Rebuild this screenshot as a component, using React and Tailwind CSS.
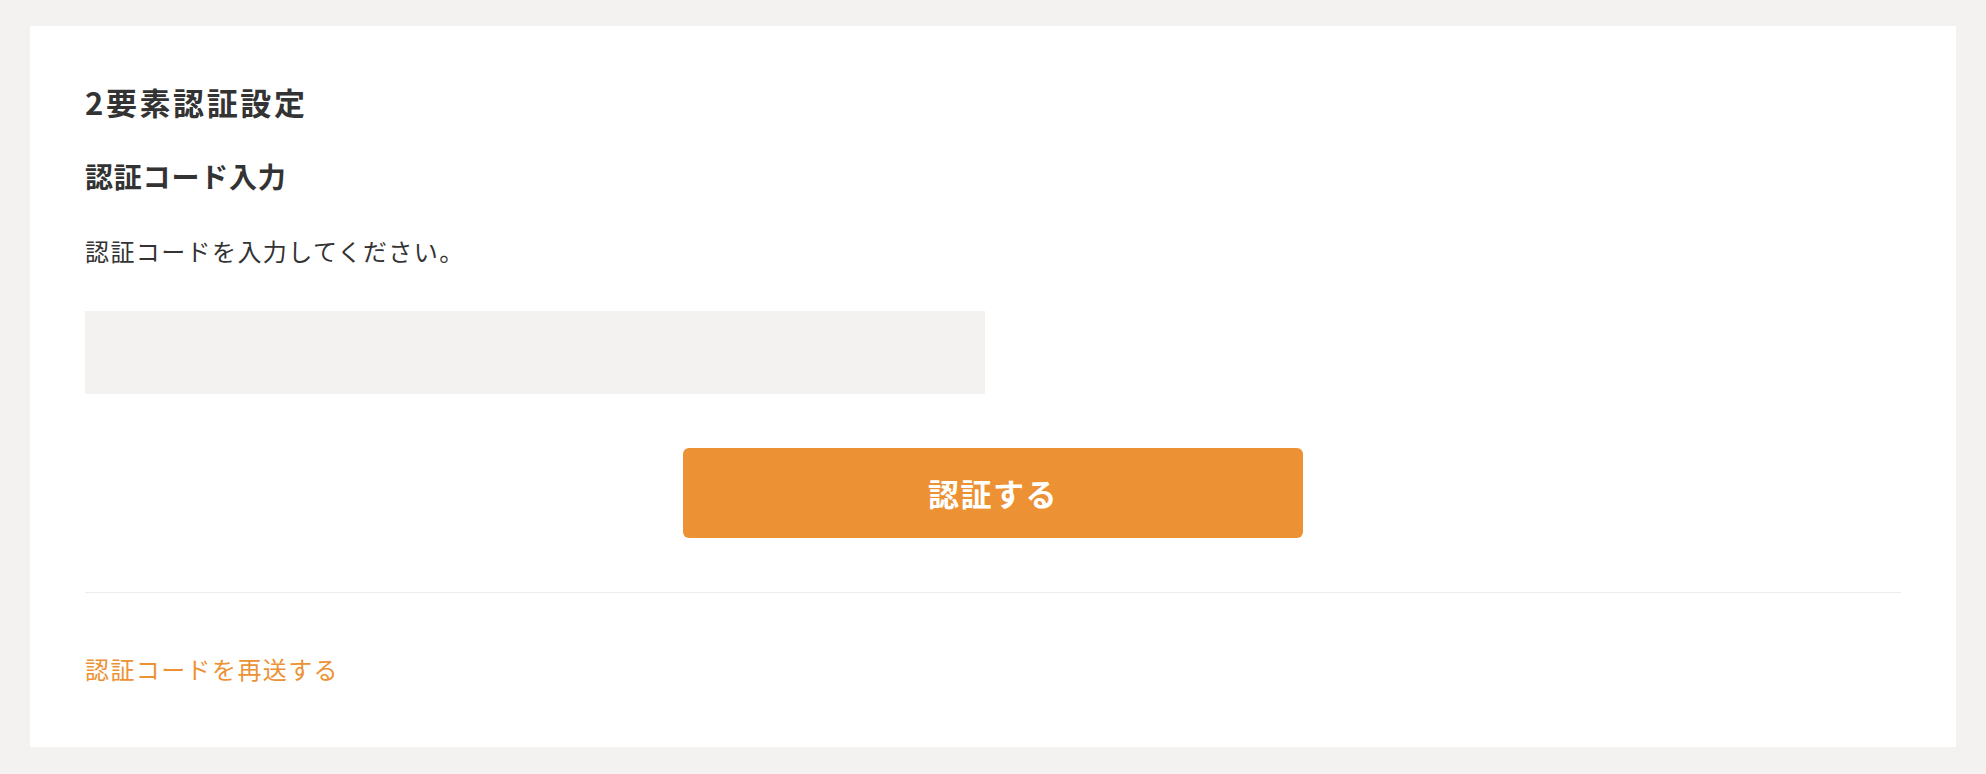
export default function App() {
  const font = { fontFamily: '"Noto Sans CJK JP", "Noto Sans", sans-serif' }

  return (
    <div className="min-h-screen bg-[#f3f2f0] px-[30px] py-[26px]" style={font}>
      <div className="bg-white px-[55px] pt-[54px] pb-[60px] text-[#333333]">
        <h1 className="text-[31px] font-bold leading-[44px] tracking-[2.6px]">2要素認証設定</h1>

        <h2 className="mt-[31px] text-[28px] font-bold leading-[42px] tracking-[0.8px]">認証コード入力</h2>

        <p className="mt-[36px] text-[24px] leading-[36px] tracking-[1.4px]">認証コードを入力してください。</p>

        <input
          type="text"
          className="mt-[42px] block h-[83px] w-[900px] bg-[#f3f2f0] px-4 text-[24px] outline-none"
        />

        <div className="mt-[54px] flex justify-center">
          <button className="h-[90px] w-[620px] rounded-md bg-[#ec9234] text-[31px] font-bold tracking-[1.5px] text-white">
            認証する
          </button>
        </div>

        <div className="mt-[54px] h-px bg-[#ececec]" />

        <a href="#" className="mt-[58px] block text-[24px] leading-[36px] tracking-[1.4px] text-[#ec9234]">
          認証コードを再送する
        </a>
      </div>
    </div>
  )
}
